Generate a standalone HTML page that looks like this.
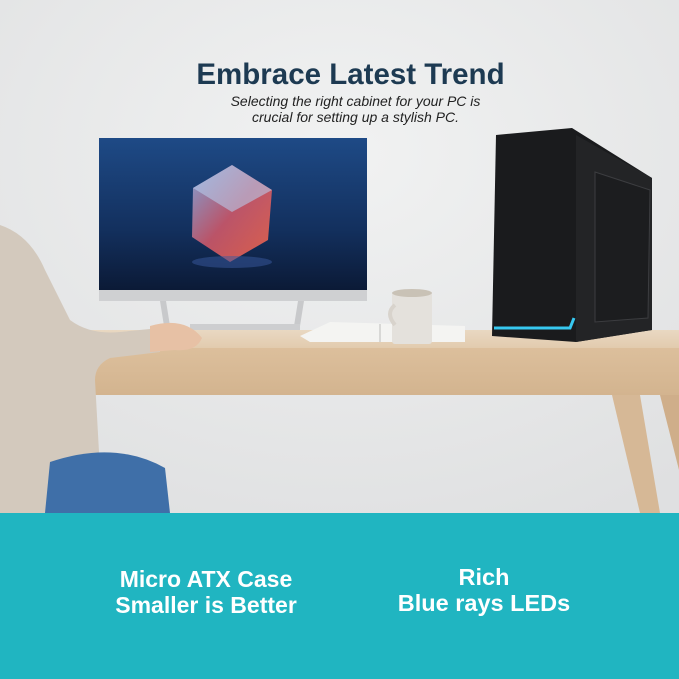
<!DOCTYPE html>
<html><head><style>
html,body{margin:0;padding:0}
body{width:679px;height:679px;overflow:hidden;position:relative;font-family:"Liberation Sans",sans-serif}
.t{position:absolute;left:11px;width:679px;text-align:center}
</style></head><body>
<svg width="679" height="679" style="position:absolute;left:0;top:0">
<defs>
<radialGradient id="bg" cx="0.5" cy="0.3" r="0.8"><stop offset="0" stop-color="#f1f2f2"/><stop offset="1" stop-color="#dfe0e1"/></radialGradient>
<linearGradient id="scr" x1="0" y1="0" x2="0" y2="1"><stop offset="0" stop-color="#1e4a86"/><stop offset="0.6" stop-color="#13305e"/><stop offset="1" stop-color="#0b1a36"/></linearGradient>
<linearGradient id="top" x1="0" y1="0" x2="0" y2="1"><stop offset="0" stop-color="#e9d8c2"/><stop offset="1" stop-color="#e2cbae"/></linearGradient>
<linearGradient id="front" x1="0" y1="0" x2="0" y2="1"><stop offset="0" stop-color="#dcbf9c"/><stop offset="1" stop-color="#d3b48f"/></linearGradient>
<linearGradient id="cube" x1="0" y1="0" x2="1" y2="1"><stop offset="0" stop-color="#8fb4e8"/><stop offset="0.5" stop-color="#d85a6a"/><stop offset="1" stop-color="#ff6a4a"/></linearGradient>
</defs>
<rect width="679" height="513" fill="url(#bg)"/>
<rect x="99" y="138" width="268" height="152" fill="url(#scr)"/>
<polygon points="232,165 272,190 268,240 230,262 192,237 193,188" fill="url(#cube)" opacity="0.85"/>
<polygon points="232,165 272,190 232,212 193,188" fill="#b8c9ea" opacity="0.6"/>
<ellipse cx="232" cy="262" rx="40" ry="6" fill="#3a5aa0" opacity="0.5"/>
<rect x="99" y="290" width="268" height="11" fill="#cfd0d2"/>
<polygon points="160,301 166,301 170,326 164,326" fill="#c8c9cb"/>
<polygon points="298,301 304,301 300,326 294,326" fill="#c8c9cb"/>
<rect x="190" y="324" width="110" height="6" fill="#cdced0"/>
<polygon points="28,330 679,330 679,348 28,348" fill="url(#top)"/>
<rect x="28" y="348" width="651" height="47" fill="url(#front)"/>
<polygon points="612,395 640,395 660,513 640,513" fill="#d6b896"/>
<polygon points="660,395 679,395 679,470" fill="#cfae8a"/>
<polygon points="300,336 330,322 465,326 465,342 310,342" fill="#f4f4f2"/>
<line x1="380" y1="324" x2="380" y2="342" stroke="#bbb"/>
<rect x="392" y="292" width="40" height="52" rx="3" fill="#e4e1dc"/>
<ellipse cx="412" cy="293" rx="20" ry="4" fill="#c9c2b6"/>
<path d="M395 305 q-10 8 0 20" stroke="#d8d3cc" stroke-width="4" fill="none"/>
<polygon points="496,135 572,128 652,178 652,330 576,342 492,336" fill="#1a1b1d"/>
<polygon points="576,135 652,178 652,330 576,342" fill="#232426"/>
<polygon points="595,172 650,190 648,318 595,322" fill="#1c1d1f" stroke="#3c3d40" stroke-width="1"/>
<path d="M494 328 L570 328 L574 318" stroke="#37c8f0" stroke-width="3" fill="none"/>
<!-- person -->
<path d="M0 225 Q30 235 45 270 L70 320 Q90 335 120 332 L160 328 L160 352 L110 358 Q95 365 95 380 L100 470 L90 513 L0 513 Z" fill="#d3c9bd"/>
<path d="M150 326 Q185 316 202 338 Q196 352 175 350 L150 352 Z" fill="#e7c1a5"/>
<path d="M50 462 Q115 440 165 468 L170 513 L45 513 Z" fill="#3f6fa8"/>
<rect y="513" width="679" height="166" fill="#20b5c1"/>
</svg>
<div class="t" style="top:58px;font-size:29.5px;font-weight:bold;color:#1d3a52">Embrace Latest Trend</div>
<div class="t" style="top:93px;font-size:14px;font-style:italic;color:#222;line-height:16px;left:16px">Selecting the right cabinet for your PC is<br>crucial for setting up a stylish PC.</div>
<div style="position:absolute;left:86px;width:240px;top:566px;text-align:center;color:#fff;font-weight:bold;font-size:23px;line-height:26px">Micro ATX Case<br>Smaller is Better</div>
<div style="position:absolute;left:364px;width:240px;top:564px;text-align:center;color:#fff;font-weight:bold;font-size:23.5px;line-height:26px">Rich<br>Blue rays LEDs</div>
</body></html>
